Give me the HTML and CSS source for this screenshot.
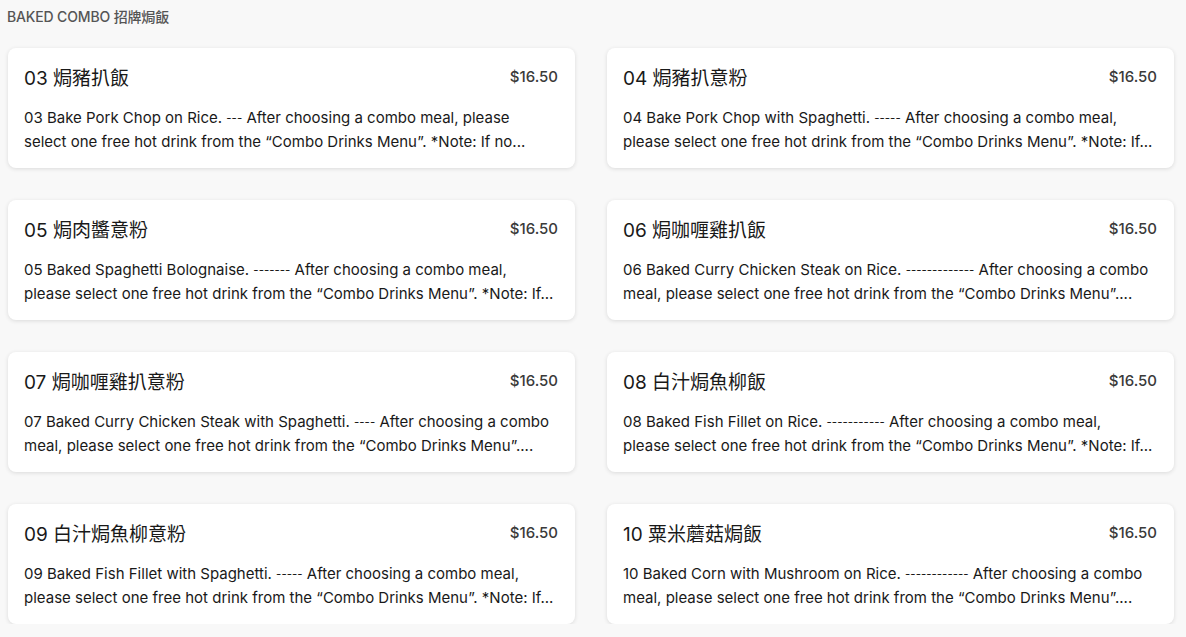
FILE: index.html
```html
<!DOCTYPE html>
<html lang="zh-Hant">
<head>
<meta charset="utf-8">
<link rel="stylesheet" href="styles.css">
</head>
<body>
<section class="section">
  <h2 class="section-title">BAKED COMBO 招牌焗飯</h2>
  <div class="grid">
    <div class="card">
      <div class="card-head"><h3 class="name">03 焗豬扒飯</h3><span class="price">$16.50</span></div>
      <p class="desc">03 Bake Pork Chop on Rice. <span class="dash">---</span> After choosing a combo meal, please<br>select one free hot drink from the “Combo Drinks Menu”. *Note: If no...</p>
    </div>
    <div class="card">
      <div class="card-head"><h3 class="name">04 焗豬扒意粉</h3><span class="price">$16.50</span></div>
      <p class="desc">04 Bake Pork Chop with Spaghetti. <span class="dash">-----</span> After choosing a combo meal,<br>please select one free hot drink from the “Combo Drinks Menu”. *Note: If...</p>
    </div>
    <div class="card">
      <div class="card-head"><h3 class="name">05 焗肉醬意粉</h3><span class="price">$16.50</span></div>
      <p class="desc">05 Baked Spaghetti Bolognaise. <span class="dash">-------</span> After choosing a combo meal,<br>please select one free hot drink from the “Combo Drinks Menu”. *Note: If...</p>
    </div>
    <div class="card">
      <div class="card-head"><h3 class="name">06 焗咖喱雞扒飯</h3><span class="price">$16.50</span></div>
      <p class="desc">06 Baked Curry Chicken Steak on Rice. <span class="dash">-------------</span> After choosing a combo<br>meal, please select one free hot drink from the “Combo Drinks Menu”....</p>
    </div>
    <div class="card">
      <div class="card-head"><h3 class="name">07 焗咖喱雞扒意粉</h3><span class="price">$16.50</span></div>
      <p class="desc">07 Baked Curry Chicken Steak with Spaghetti. <span class="dash">----</span> After choosing a combo<br>meal, please select one free hot drink from the “Combo Drinks Menu”....</p>
    </div>
    <div class="card">
      <div class="card-head"><h3 class="name">08 白汁焗魚柳飯</h3><span class="price">$16.50</span></div>
      <p class="desc">08 Baked Fish Fillet on Rice. <span class="dash">-----------</span> After choosing a combo meal,<br>please select one free hot drink from the “Combo Drinks Menu”. *Note: If...</p>
    </div>
    <div class="card">
      <div class="card-head"><h3 class="name">09 白汁焗魚柳意粉</h3><span class="price">$16.50</span></div>
      <p class="desc">09 Baked Fish Fillet with Spaghetti. <span class="dash">-----</span> After choosing a combo meal,<br>please select one free hot drink from the “Combo Drinks Menu”. *Note: If...</p>
    </div>
    <div class="card">
      <div class="card-head"><h3 class="name">10 粟米蘑菇焗飯</h3><span class="price">$16.50</span></div>
      <p class="desc">10 Baked Corn with Mushroom on Rice. <span class="dash">------------</span> After choosing a combo<br>meal, please select one free hot drink from the “Combo Drinks Menu”....</p>
    </div>
  </div>
</section>
</body>
</html>
```

FILE: styles.css
```css
html, body {
  margin: 0;
  padding: 0;
  background: #f8f8f8;
}
body {
  font-family: "Inter", "Noto Sans CJK TC", sans-serif;
  color: #191919;
  overflow: hidden;
}
.section {
  padding: 9px 12px 0 8px;
}
.section-title {
  margin: 0 0 23px -1px;
  font-size: 14px;
  line-height: 16px;
  font-weight: 500;
  color: #555;
  letter-spacing: -0.15px;
}
.grid {
  display: grid;
  grid-template-columns: 1fr 1fr;
  column-gap: 32px;
  row-gap: 32px;
}
.card {
  background: #fff;
  border-radius: 8px;
  box-shadow: 0 1px 4px rgba(0, 0, 0, 0.12);
  padding: 19px 17px 14px 16px;
  height: 120px;
  box-sizing: border-box;
}
.card-head {
  display: flex;
  justify-content: space-between;
  align-items: flex-start;
  margin-bottom: 15px;
}
.name {
  margin: 0;
  font-size: 19px;
  line-height: 24px;
  font-weight: 400;
  color: #191919;
}
.price {
  font-size: 15px;
  line-height: 20px;
  font-weight: 500;
  color: #3a3a3a;
}
.desc {
  margin: 0;
  font-size: 15px;
  line-height: 24px;
  color: #191919;
  display: -webkit-box;
  -webkit-box-orient: vertical;
  -webkit-line-clamp: 2;
  overflow: hidden;
}
.dash {
  font-size: 11.5px;
  line-height: 0;
  position: relative;
  top: -1px;
}
```
